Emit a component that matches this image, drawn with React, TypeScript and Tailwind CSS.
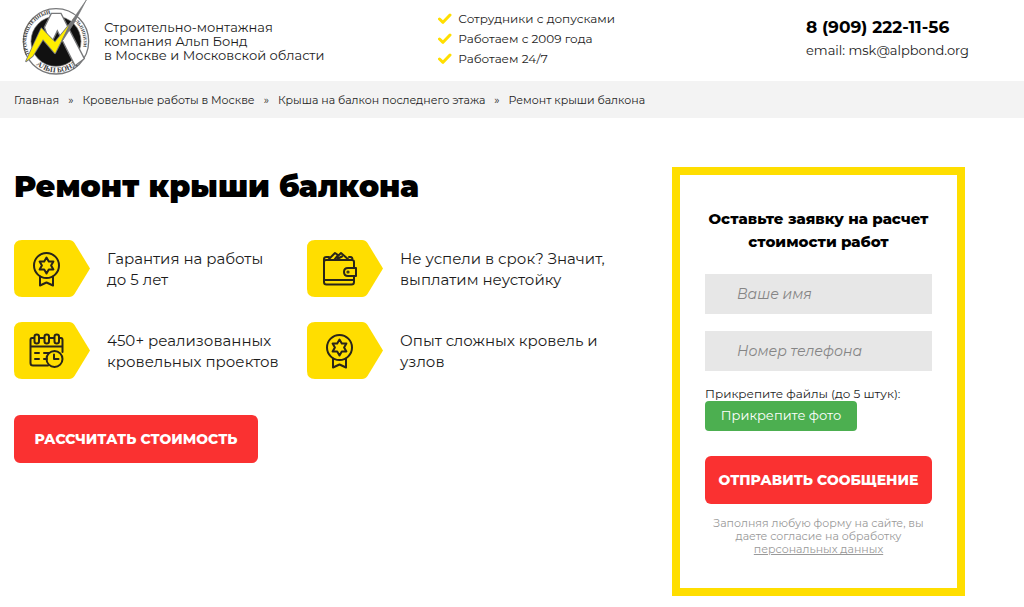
import type { ReactNode } from 'react';

const perks = ['Сотрудники с допусками', 'Работаем с 2009 года', 'Работаем 24/7'];

const crumbs = ['Главная', 'Кровельные работы в Москве', 'Крыша на балкон последнего этажа'];

const features = [
  { icon: <MedalIcon />, lines: ['Гарантия на работы', 'до 5 лет'] },
  { icon: <WalletIcon />, lines: ['Не успели в срок? Значит,', 'выплатим неустойку'] },
  { icon: <CalendarIcon />, lines: ['450+ реализованных', 'кровельных проектов'] },
  { icon: <MedalIcon />, lines: ['Опыт сложных кровель и', 'узлов'] },
];

function Logo() {
  return (
    <svg viewBox="30 0 210 228" className="h-[76px] w-[70px] shrink-0" role="img" aria-label="Альп Бонд">
      <defs>
        <path id="ring-left" d="M58 162A84 84 0 0 1 128 41" />
        <path id="ring-right" d="M187 58A82 82 0 0 1 218 146" />
        <path id="ring-bottom" d="M72 188A92 92 0 0 0 206 188" />
      </defs>
      <circle cx="138" cy="124" r="98" fill="#fff" stroke="#77787a" strokeWidth="4" />
      <circle cx="138" cy="124" r="75" fill="#111" stroke="#777" strokeWidth="2" />
      <g fill="#3b3b3b" fontFamily="'Liberation Serif', serif" fontWeight="bold">
        <text fontSize="16"><textPath href="#ring-left">ПРОМЫШЛЕННЫЙ</textPath></text>
        <text fontSize="14"><textPath href="#ring-right">АЛЬПИНИЗМ</textPath></text>
        <text fontSize="22"><textPath href="#ring-bottom" startOffset="50%" textAnchor="middle">АЛЬП БОНД</textPath></text>
      </g>
      <path d="M103 82 124 40h29l70 136-28 21-53-105-20 42z" fill="#fff" stroke="#77787a" strokeWidth="4" />
      <path d="M172 82 229 0l-36 68-34 52z" fill="#77787a" stroke="#77787a" strokeWidth="2" />
      <path d="M48 184 94 85l41 42 47-58-47 91-36-42-31 50z" fill="#ffee00" stroke="#77787a" strokeWidth="5" strokeLinejoin="round" />
      <path d="M48 184 94 85l41 42 42-52-42 85-36-42-31 50z" fill="#ffee00" />
    </svg>
  );
}

function CheckIcon() {
  return (
    <svg viewBox="0 0 14 12" className="h-3 w-3.5 shrink-0" fill="none" stroke="#ffde00" strokeWidth="3" strokeLinecap="round" strokeLinejoin="round" aria-hidden="true">
      <path d="M1.500 6l3.500 3.300L12 2" />
    </svg>
  );
}

function Badge({ children }: { children: ReactNode }) {
  return (
    <svg viewBox="0 0 76 57" className="h-[57px] w-[76px] shrink-0" fill="none" stroke="#29251a" strokeWidth="2" strokeLinecap="round" strokeLinejoin="round" aria-hidden="true">
      <path d="M8 0h47q3.500 0 5.500 3L76 28.500 60.500 54q-2 3-5.500 3H8q-8 0-8-8V8q0-8 8-8z" fill="#ffde00" stroke="none" />
      {children}
    </svg>
  );
}

function MedalIcon() {
  return (
    <Badge>
      <circle cx="32.500" cy="25.500" r="12.500" />
      <path d="M32.500 17.500l2.300 4h4.600l-2.300 4 2.300 4h-4.600l-2.300 4-2.300-4h-4.600l2.300-4-2.300-4h4.600z" />
      <path d="M26 36.500v9l6.500-3 6.500 3v-9" />
    </Badge>
  );
}

function WalletIcon() {
  return (
    <Badge>
      <path d="M47 27V22q0-2-2-2H19q-2 0-2 2v20q0 2.500 2.500 2.500H44.500q2.500 0 2.500-2.500V36M17 40h30M17 22v-3q0-2 2.500-2H22M42 17h1.500q2 0 2 3" />
      <path d="M21 20l7-7 3 2-4 5M28 19l6-6 8 7M31 18.500l4-2" />
      <path d="M49 28h-8q-4 0-4 4t4 4h8z" />
      <circle cx="41" cy="32" r=".6" />
    </Badge>
  );
}

function CalendarIcon() {
  return (
    <Badge>
      <path d="M20 16h-2q-1.500 0-1.500 2v23q0 2.500 2.500 2.500h15M25 16h5M35 16h5M45 16h2q1.500 0 1.500 2v12M16.500 24.500h32" />
      <rect x="20.500" y="12.500" width="4.500" height="9" rx="2.200" />
      <rect x="30.500" y="12.500" width="4.500" height="9" rx="2.200" />
      <rect x="40.500" y="12.500" width="4.500" height="9" rx="2.200" />
      <path d="M21 31h4M30 31h5M21 37h4M30 37h3" />
      <circle cx="40.500" cy="37" r="8" />
      <path d="M40 32.500V37h4.500" />
    </Badge>
  );
}

function Header() {
  return (
    <header className="flex h-[81px] items-start pl-5">
      <div className="flex w-5/12 items-start gap-3.5">
        <Logo />
        <p className="pt-5 text-[13px] leading-[14px]">
          Строительно-монтажная
          <br />
          компания Альп Бонд
          <br />в Москве и Московской области
        </p>
      </div>
      <ul className="flex-1 pt-[9px] text-[12px] leading-5">
        {perks.map((perk) => (
          <li key={perk} className="flex items-center gap-1.5">
            <CheckIcon />
            {perk}
          </li>
        ))}
      </ul>
      <div className="w-[218px] pt-4">
        <a href="tel:+79092221156" className="block text-[17px] leading-[23px] font-bold text-black">
          8 (909) 222-11-56
        </a>
        <a href="mailto:msk@alpbond.org" className="block text-[13px] leading-[22px]">
          email: msk@alpbond.org
        </a>
      </div>
    </header>
  );
}

function Breadcrumbs() {
  return (
    <nav className="flex h-[37px] items-center gap-[9px] bg-[#f3f3f3] px-3.5 pt-px text-[11px]">
      {crumbs.map((crumb) => (
        <span key={crumb} className="flex gap-[9px]">
          <a href="#">{crumb}</a>
          <span>»</span>
        </span>
      ))}
      <span>Ремонт крыши балкона</span>
    </nav>
  );
}

function RequestForm() {
  return (
    <form className="w-[293px] shrink-0 border-8 border-[#ffde00] px-[25px] py-8 text-center" onSubmit={(e) => e.preventDefault()}>
      <h2 className="text-[15px] leading-[23px] font-extrabold whitespace-nowrap text-black">
        Оставьте заявку на расчет
        <br />
        стоимости работ
      </h2>
      <input
        aria-label="Ваше имя"
        placeholder="Ваше имя"
        className="mt-[21px] block h-10 w-full bg-[#e7e7e7] px-8 text-[14px] placeholder:text-[#858585] placeholder:italic"
      />
      <input
        type="tel"
        aria-label="Номер телефона"
        placeholder="Номер телефона"
        className="mt-[17px] block h-10 w-full bg-[#e7e7e7] px-8 text-[14px] placeholder:text-[#858585] placeholder:italic"
      />
      <p id="files-label" className="mt-4 text-left text-[12px] leading-[14px]">
        Прикрепите файлы (до 5 штук):
      </p>
      <button type="button" aria-describedby="files-label" className="block h-[30px] w-[152px] rounded bg-[#4caf50] text-[13px] text-white">
        Прикрепите фото
      </button>
      <button type="submit" className="mt-[25px] block h-12 w-full rounded-md bg-[#fa3131] text-[14px] font-extrabold whitespace-nowrap text-white">
        ОТПРАВИТЬ СООБЩЕНИЕ
      </button>
      <p className="mt-[13px] text-[11px] leading-[13px] text-[#999]">
        Заполняя любую форму на сайте, вы
        <br />
        даете согласие на обработку
        <br />
        <a href="#" className="underline">
          персональных данных
        </a>
      </p>
    </form>
  );
}

export default function App() {
  return (
    <div className="bg-white font-['Montserrat','Inter','Noto_Sans',sans-serif] text-[#1c1c1c]">
      <Header />
      <Breadcrumbs />
      <main className="flex items-start justify-between pt-[49px] pr-[59px] pb-3 pl-3.5">
        <section>
          <h1 className="text-[30px] leading-10 font-black text-black">Ремонт крыши балкона</h1>
          <ul className="mt-[33px] grid grid-cols-[293px_293px] gap-y-[25px]">
            {features.map(({ icon, lines }) => (
              <li key={lines[0]} className="flex items-center gap-[17px] text-[15px] leading-[21px] whitespace-nowrap">
                {icon}
                <span>
                  {lines[0]}
                  <br />
                  {lines[1]}
                </span>
              </li>
            ))}
          </ul>
          <button type="button" className="mt-9 h-12 w-[244px] rounded-md bg-[#fa3131] text-[14px] font-extrabold text-white">
            РАССЧИТАТЬ СТОИМОСТЬ
          </button>
        </section>
        <RequestForm />
      </main>
    </div>
  );
}
